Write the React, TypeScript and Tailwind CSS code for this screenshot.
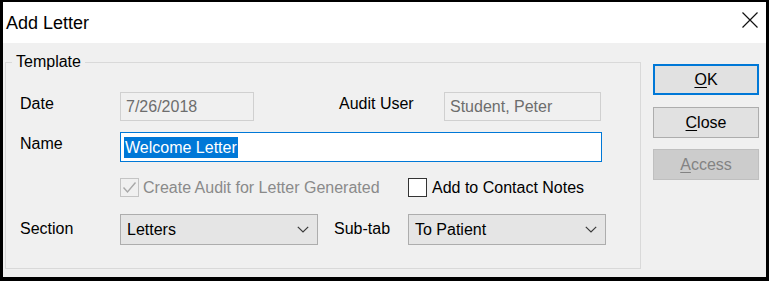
import React from "react";

function Chevron() {
  return (
    <svg width="12" height="7" viewBox="0 0 12 7" className="shrink-0">
      <path d="M0.8 0.8 L6 6 L11.2 0.8" fill="none" stroke="#3a3a3a" strokeWidth="1.2" />
    </svg>
  );
}

export default function App() {
  return (
    <div className="w-[769px] h-[281px] box-border border-black border-t-2 border-l-[3px] border-r-[3px] border-b-4 bg-[#f0f0f0] flex flex-col font-['Liberation_Sans',Arial,sans-serif] text-[16px] leading-[18px] text-black overflow-hidden">
      {/* Title bar */}
      <div className="h-[41px] bg-white flex items-start justify-between shrink-0">
        <div className="pl-[3px] mt-[11px] text-[18px] leading-[20px]">Add Letter</div>
        <svg width="16" height="16" viewBox="0 0 16 16" className="mt-[10px] mr-[8px]">
          <path d="M0.5 0.5 L15.5 15.5 M15.5 0.5 L0.5 15.5" stroke="#111" strokeWidth="1.2" />
        </svg>
      </div>

      {/* Body */}
      <div className="flex flex-1">
        {/* Group box */}
        <div className="ml-[2px] mt-[19px] w-[636px] h-[207px] box-border border border-[#d9d9d9] flex flex-col">
          <div className="-mt-[10px] ml-[6px] px-[4px] bg-[#f0f0f0] w-fit leading-[18px]">Template</div>

          <div className="pl-[14px] flex flex-col">
            {/* Row 1 */}
            <div className="flex items-start mt-[21px]">
              <div className="w-[100px] mt-[3px]">Date</div>
              <div className="w-[134px] h-[29px] box-border border border-[#d0d0d0] bg-[#f0f0f0] text-[#6d6d6d] flex items-center pl-[5px]">7/26/2018</div>
              <div className="ml-[85px] w-[105px] mt-[3px]">Audit User</div>
              <div className="w-[157px] h-[29px] box-border border border-[#d0d0d0] bg-[#f0f0f0] text-[#6d6d6d] flex items-center pl-[5px]">Student, Peter</div>
            </div>

            {/* Row 2 */}
            <div className="flex items-start mt-[11px]">
              <div className="w-[100px] mt-[3px]">Name</div>
              <div className="w-[482px] h-[30px] box-border border border-[#0078d7] bg-white flex items-center pl-[3px]">
                <span className="bg-[#0078d7] text-white leading-[21px] px-[1px]">Welcome Letter</span>
              </div>
            </div>

            {/* Row 3 */}
            <div className="flex items-center mt-[16px]">
              <div className="w-[100px]" />
              <div className="w-[288px] flex items-center">
                <div className="w-[19px] h-[19px] box-border border border-[#c4c4c4] bg-[#f0f0f0] flex items-center justify-center">
                  <svg width="17" height="17" viewBox="0 0 17 17">
                    <path d="M2.5 8.5 L6.5 13 L14.5 3.5" fill="none" stroke="#a8a8a8" strokeWidth="1.4" />
                  </svg>
                </div>
                <span className="ml-[4px] text-[#8a8a8a]">Create Audit for Letter Generated</span>
              </div>
              <div className="flex items-center">
                <div className="w-[19px] h-[19px] box-border border-[1.5px] border-[#333] bg-white" />
                <span className="ml-[5px]">Add to Contact Notes</span>
              </div>
            </div>

            {/* Row 4 */}
            <div className="flex items-start mt-[17px]">
              <div className="w-[100px] mt-[6px]">Section</div>
              <div className="w-[198px] h-[31px] box-border border border-[#adadad] bg-[#e5e5e5] flex items-center justify-between pl-[6px] pr-[8px]">
                <span>Letters</span>
                <Chevron />
              </div>
              <div className="ml-[16px] w-[74px] mt-[6px]">Sub-tab</div>
              <div className="w-[198px] h-[31px] box-border border border-[#adadad] bg-[#e5e5e5] flex items-center justify-between pl-[6px] pr-[8px]">
                <span>To Patient</span>
                <Chevron />
              </div>
            </div>
          </div>
        </div>

        {/* Buttons */}
        <div className="ml-[12px] mt-[21px] w-[106px] flex flex-col">
          <div className="h-[31px] box-border border-2 border-[#0078d7] bg-[#e1e1e1] flex items-center justify-center">
            <span><span className="underline underline-offset-2">O</span>K</span>
          </div>
          <div className="mt-[12px] h-[31px] box-border border border-[#adadad] bg-[#e1e1e1] flex items-center justify-center">
            <span><span className="underline underline-offset-2">C</span>lose</span>
          </div>
          <div className="mt-[11px] h-[31px] box-border border border-[#bfbfbf] bg-[#cccccc] text-[#838383] flex items-center justify-center">
            <span><span className="underline underline-offset-2">A</span>ccess</span>
          </div>
        </div>
      </div>
    </div>
  );
}
